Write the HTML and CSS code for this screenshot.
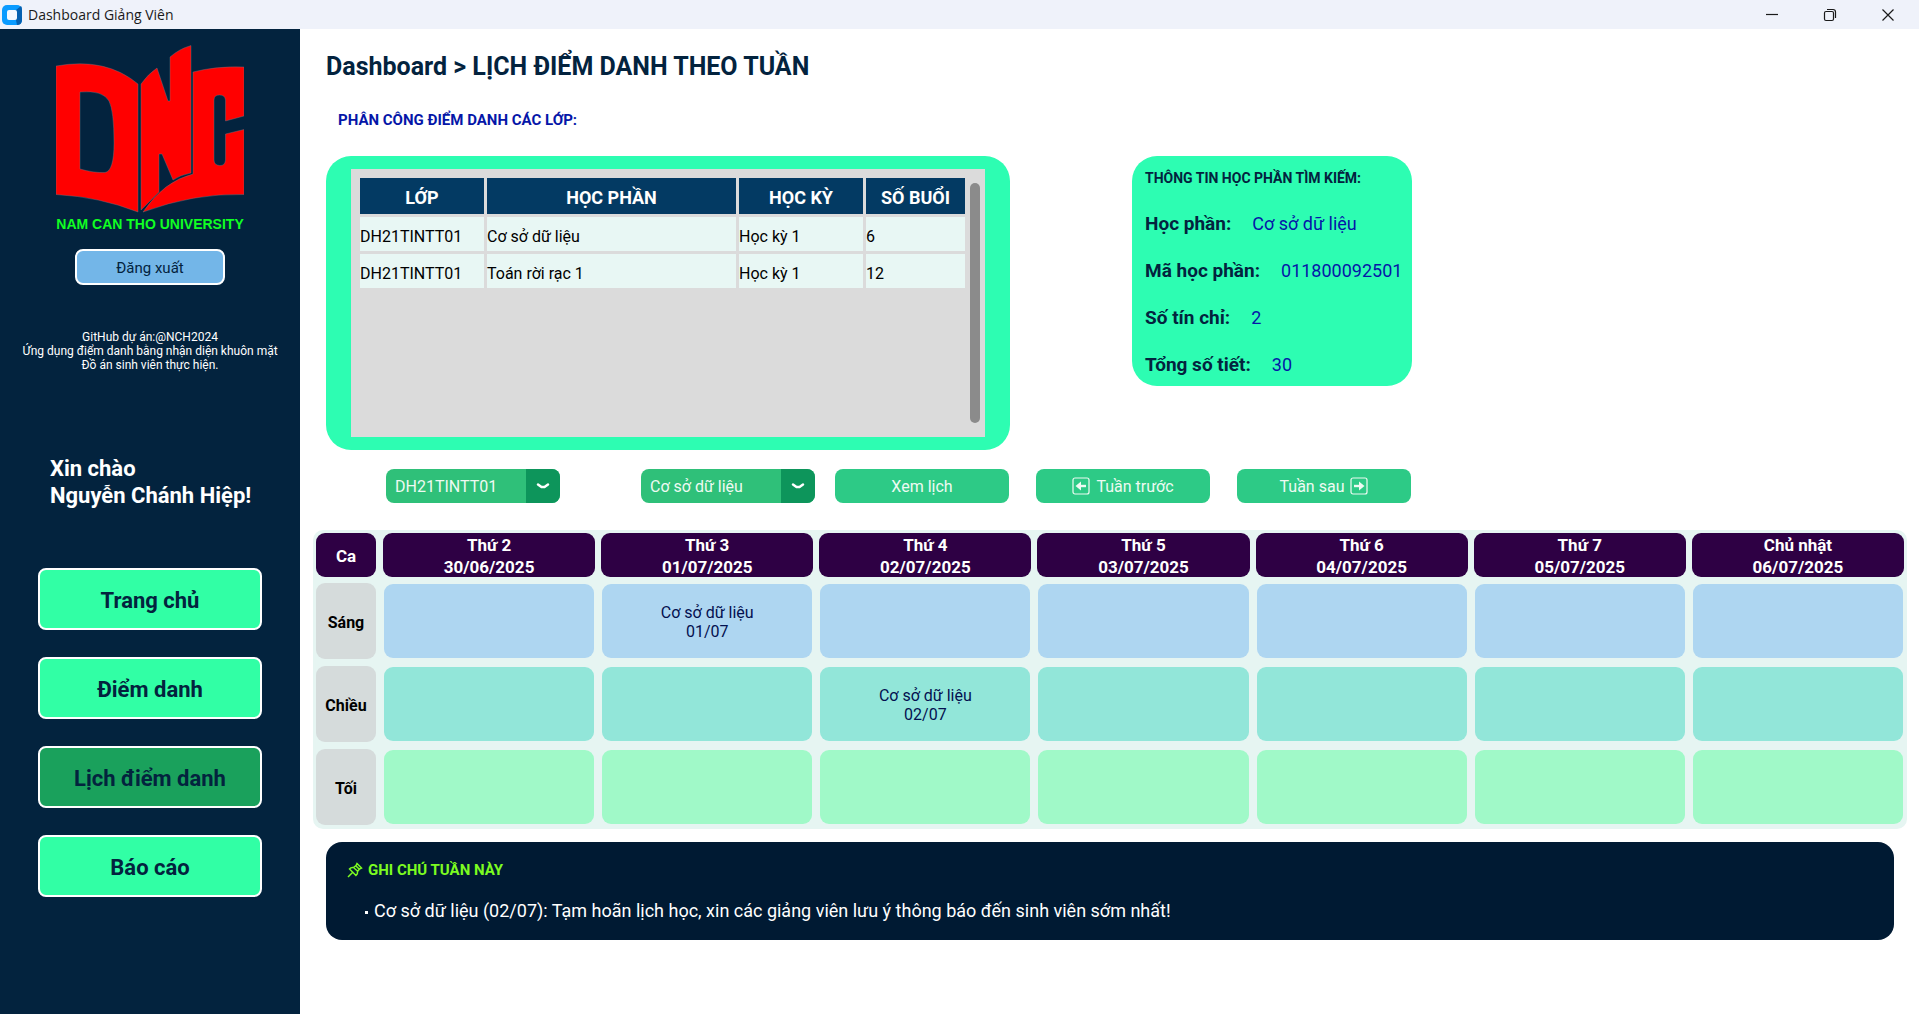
FILE: index.html
```html
<!DOCTYPE html>
<html lang="vi">
<head>
<meta charset="utf-8">
<title>Dashboard Giảng Viên</title>
<link rel="stylesheet" href="styles.css">
</head>
<body>
<header class="titlebar">
  <svg class="app-icon" width="20" height="20" viewBox="0 0 20 20" aria-hidden="true">
    <rect width="20" height="20" rx="5" fill="#0a9bff"/>
    <path d="M14 5l5-4q1 1 1 4v10q0 5-5 5l-1-5z" fill="#0560b0"/>
    <rect x="5" y="5" width="10" height="10" rx="2" fill="#f4f8ff"/>
  </svg>
  <span class="app-title">Dashboard Giảng Viên</span>
  <div class="window-buttons">
    <button type="button" aria-label="Minimize"><svg width="14" height="14" viewBox="0 0 14 14"><path d="M1 6.5h12"/></svg></button>
    <button type="button" aria-label="Restore"><svg width="14" height="14" viewBox="0 0 14 14"><rect x="1.500" y="3.500" width="9" height="9" rx="1.500"/><path d="M4 1.500h6q2.500 0 2.500 2.500v6"/></svg></button>
    <button type="button" aria-label="Close"><svg width="14" height="14" viewBox="0 0 14 14"><path d="M1.500 1.500l11 11M12.500 1.500l-11 11"/></svg></button>
  </div>
</header>
<div class="app">
  <aside class="sidebar">
    <svg class="logo" width="188" height="186" viewBox="0 0 188 186" role="img" aria-label="Nam Can Tho University">
      <g fill="#f00" stroke="#6d7f8c" stroke-width=".4">
        <path fill-rule="evenodd" d="M0 21Q50 12 82 39V167Q44 152 0 149.500ZM24 47V124Q38 128 49 127.500Q58 126 58 98Q58 66 53 56Q47 45 24 47Z"/>
        <path d="M85 39Q92 29 101 23L112 56H114V12Q123 4 135 .500V128Q124 130 117 135L106 109H103V147L85 165Z"/>
        <path d="M137 27Q160 21 188 22V71L169.500 76V55Q169 50 163.500 50T158 55V115Q158 120 163.500 120.500T169.500 115V89L188 84.500V149.500Q138 148 87 167Q108 136 137 129Z"/>
      </g>
      <text x="94" y="184" text-anchor="middle" class="logo-text">NAM CAN THO UNIVERSITY</text>
    </svg>
    <button type="button" class="logout">Đăng xuất</button>
    <p class="about">GitHub dự án:@NCH2024<br>Ứng dụng điểm danh bằng nhận diện khuôn mặt<br>Đồ án sinh viên thực hiện.</p>
    <p class="greeting">Xin chào<br>Nguyễn Chánh Hiệp!</p>
    <nav class="menu">
      <button type="button">Trang chủ</button>
      <button type="button">Điểm danh</button>
      <button type="button" class="active" aria-current="page">Lịch điểm danh</button>
      <button type="button">Báo cáo</button>
    </nav>
  </aside>
  <main class="content">
    <h1>Dashboard &gt; LỊCH ĐIỂM DANH THEO TUẦN</h1>
    <h2 class="subtitle">PHÂN CÔNG ĐIỂM DANH CÁC LỚP:</h2>
    <div class="cards">
      <section class="class-card">
        <div class="class-panel">
          <table class="class-table">
            <colgroup><col class="c-class"><col class="c-course"><col class="c-term"><col class="c-count"></colgroup>
            <thead><tr><th>LỚP</th><th>HỌC PHẦN</th><th>HỌC KỲ</th><th>SỐ BUỔI</th></tr></thead>
            <tbody>
              <tr><td>DH21TINTT01</td><td>Cơ sở dữ liệu</td><td>Học kỳ 1</td><td>6</td></tr>
              <tr><td>DH21TINTT01</td><td>Toán rời rạc 1</td><td>Học kỳ 1</td><td>12</td></tr>
            </tbody>
          </table>
          <div class="scrollbar"></div>
        </div>
      </section>
      <section class="info-card">
        <h2>THÔNG TIN HỌC PHẦN TÌM KIẾM:</h2>
        <dl>
          <div><dt>Học phần:</dt><dd>Cơ sở dữ liệu</dd></div>
          <div><dt>Mã học phần:</dt><dd>011800092501</dd></div>
          <div><dt>Số tín chỉ:</dt><dd>2</dd></div>
          <div><dt>Tổng số tiết:</dt><dd>30</dd></div>
        </dl>
      </section>
    </div>
    <div class="toolbar">
      <div class="filters">
        <div class="combo">
          <select aria-label="Lớp"><option>DH21TINTT01</option></select>
          <span class="combo-arrow"><svg width="14" height="8" viewBox="0 0 14 8"><path d="M2 2.500L5.500 5H8.500L12 2.500"/></svg></span>
        </div>
        <div class="combo">
          <select aria-label="Học phần"><option>Cơ sở dữ liệu</option></select>
          <span class="combo-arrow"><svg width="14" height="8" viewBox="0 0 14 8"><path d="M2 2.500L5.500 5H8.500L12 2.500"/></svg></span>
        </div>
      </div>
      <div class="actions">
        <button type="button">Xem lịch</button>
        <button type="button"><svg width="18" height="18" viewBox="0 0 18 18"><rect x="1" y="1" width="16" height="16" rx="2"/><path class="arrow" d="M14 9H7"/><path class="arrow-head" d="M3.500 9L9 4.500V13.500Z"/></svg>Tuần trước</button>
        <button type="button">Tuần sau<svg width="18" height="18" viewBox="0 0 18 18"><rect x="1" y="1" width="16" height="16" rx="2"/><path class="arrow" d="M4 9h7"/><path class="arrow-head" d="M14.500 9L9 4.500V13.500Z"/></svg></button>
      </div>
    </div>
    <table class="schedule">
      <thead>
        <tr>
          <th class="shift"><div>Ca</div></th>
          <th><div>Thứ 2<br>30/06/2025</div></th>
          <th><div>Thứ 3<br>01/07/2025</div></th>
          <th><div>Thứ 4<br>02/07/2025</div></th>
          <th><div>Thứ 5<br>03/07/2025</div></th>
          <th><div>Thứ 6<br>04/07/2025</div></th>
          <th><div>Thứ 7<br>05/07/2025</div></th>
          <th><div>Chủ nhật<br>06/07/2025</div></th>
        </tr>
      </thead>
      <tbody>
        <tr class="morning">
          <th class="shift"><div>Sáng</div></th>
          <td><div></div></td><td><div>Cơ sở dữ liệu<br>01/07</div></td><td><div></div></td><td><div></div></td><td><div></div></td><td><div></div></td><td><div></div></td>
        </tr>
        <tr class="afternoon">
          <th class="shift"><div>Chiều</div></th>
          <td><div></div></td><td><div></div></td><td><div>Cơ sở dữ liệu<br>02/07</div></td><td><div></div></td><td><div></div></td><td><div></div></td><td><div></div></td>
        </tr>
        <tr class="evening">
          <th class="shift"><div>Tối</div></th>
          <td><div></div></td><td><div></div></td><td><div></div></td><td><div></div></td><td><div></div></td><td><div></div></td><td><div></div></td>
        </tr>
      </tbody>
    </table>
    <section class="notes">
      <h2><svg width="16" height="16" viewBox="0 0 16 16" aria-hidden="true"><path d="M10 1.500L14.500 6L12.500 7L10.500 9.500Q11 12 9 13.500L2.500 7Q4 5 6.500 5.500L9 3.500ZM5.500 10.500L1 15M7 6l4 3.500M9 4l3 3"/></svg>GHI CHÚ TUẦN NÀY</h2>
      <ul><li>Cơ sở dữ liệu (02/07): Tạm hoãn lịch học, xin các giảng viên lưu ý thông báo đến sinh viên sớm nhất!</li></ul>
    </section>
  </main>
</div>
</body>
</html>
```
FILE: styles.css
```css
* { box-sizing: border-box; }
body {
  margin: 0;
  min-height: 100vh;
  display: flex;
  flex-direction: column;
  background: #fff;
  color: #03233e;
  font-family: Bahnschrift, Roboto, sans-serif;
}
h1, h2, p, ul, dl, dd { margin: 0; padding: 0; }
button, select { font-family: inherit; cursor: pointer; }

.titlebar {
  display: flex;
  align-items: center;
  height: 29px;
  padding: 0 2px;
  background: #eff2fa;
  color: #1a1a1a;
}
.app-title { margin-left: 6px; font: 14px/20px "Segoe UI", "Open Sans", sans-serif; }
.window-buttons { display: flex; margin-left: auto; }
.window-buttons button {
  width: 58px;
  height: 29px;
  padding: 0;
  border: 0;
  background: none;
}
.window-buttons svg { display: block; margin: 0 auto; fill: none; stroke: #1a1a1a; stroke-width: 1.2; }

.app { flex: 1; display: flex; }
.sidebar {
  width: 300px;
  flex: none;
  display: flex;
  flex-direction: column;
  align-items: center;
  padding: 16px 0 24px;
  background: #03233e;
  color: #fff;
}
.logo { display: block; overflow: hidden; }
.logo-text { font: bold 14px "Liberation Sans", sans-serif; fill: #1f2; }
.logout {
  width: 150px;
  height: 36px;
  margin-top: 18px;
  padding: 2px 0 0;
  border: 2px solid #fff;
  border-radius: 8px;
  background: #73b6e8;
  color: #03233e;
  font-size: 15px;
}
.about { margin-top: 45px; font-size: 12px; line-height: 14px; text-align: center; }
.greeting { width: 200px; margin-top: 83px; font-size: 22px; font-weight: 700; line-height: 27px; white-space: nowrap; }
.menu { display: flex; flex-direction: column; gap: 27px; margin-top: 59px; }
.menu button {
  width: 224px;
  height: 62px;
  padding: 2px 0 0;
  border: 2px solid #fff;
  border-radius: 8px;
  background: #31ffa5;
  color: #03233e;
  font-size: 22px;
  font-weight: 700;
}
.menu .active { background: #1aa15c; }

.content { flex: 1; min-width: 0; padding: 23px 12px 24px 13px; }
h1 { margin-left: 13px; font-size: 25px; line-height: 30px; }
.subtitle { margin: 28px 0 26px 25px; color: #0516a8; font-size: 15px; line-height: 20px; }
.cards { display: flex; align-items: flex-start; gap: 122px; margin-left: 13px; }
.class-card { width: 684px; padding: 13px 25px; border-radius: 25px; background: #2dfdb2; }
.class-panel {
  display: flex;
  gap: 2px;
  height: 268px;
  padding: 6px 5px 14px 6px;
  background: #dbdbdb;
}
.class-table { flex: 1; align-self: flex-start; table-layout: fixed; border-spacing: 3px; color: #000; }
.class-table th { height: 36px; padding: 2px 0 0; background: #033a63; color: #fff; font-size: 18px; }
.class-table td { height: 34px; padding: 4px 0 0; background: #e8f7f4; font-size: 16px; }
.c-class, .c-term { width: 124px; }
.c-count { width: 99px; }
.scrollbar { width: 10px; margin-top: 8px; border-radius: 5px; background: #8b8b8b; }

.info-card { width: 280px; height: 230px; padding: 12px 13px; border-radius: 25px; background: #2dfdb2; white-space: nowrap; }
.info-card h2 { font-size: 14px; line-height: 20px; }
.info-card dl { display: grid; gap: 23px; margin-top: 24px; font-size: 19px; line-height: 24px; }
.info-card dl div { display: flex; gap: 21px; }
.info-card dt { font-weight: 700; }
.info-card dd { color: #0516a8; font-size: 18px; }

.toolbar { display: flex; gap: 20px; margin: 19px 0 27px 73px; font-family: Roboto, sans-serif; }
.filters { display: flex; gap: 81px; }
.actions { display: flex; gap: 27px; }
.combo { position: relative; width: 174px; height: 34px; border-radius: 8px; overflow: hidden; }
.combo select {
  width: 100%;
  height: 100%;
  padding: 0 40px 0 9px;
  border: 0;
  appearance: none;
  background: #2fc079;
  color: #eefaf2;
  font-size: 16px;
}
.combo-arrow {
  position: absolute;
  inset: 0 0 0 auto;
  width: 34px;
  display: grid;
  place-items: center;
  background: #0d955b;
  pointer-events: none;
}
.combo-arrow svg { fill: none; stroke: #fff; stroke-width: 2.5; stroke-linecap: round; stroke-linejoin: round; }
.actions button {
  display: flex;
  align-items: center;
  justify-content: center;
  gap: 6px;
  width: 174px;
  height: 34px;
  padding: 0;
  border: 0;
  border-radius: 8px;
  background: #2dca86;
  color: #eefaf2;
  font-size: 16px;
}
.actions svg { fill: none; stroke: #eefaf2; stroke-width: 1.2; }
.actions .arrow { stroke-width: 2.4; }
.actions .arrow-head { fill: #eefaf2; stroke: none; }

.schedule { width: 100%; table-layout: fixed; border-spacing: 0; border-radius: 10px; background: #e6f5f2; }
.schedule th, .schedule td { padding: 3px; }
.schedule td { padding: 4px; }
.schedule .shift { width: 67px; padding-right: 4px; }
.schedule div { display: grid; place-content: center; padding-top: 2px; text-align: center; border-radius: 9px; }
.schedule thead div { height: 44px; background: #2e0044; color: #fff; font-size: 17px; line-height: 22px; }
.schedule tbody th { padding-bottom: 4px; }
.schedule tbody th div { height: 76px; background: #d5dbdb; color: #000; font-size: 16px; }
.schedule tbody td { padding-bottom: 5px; }
.schedule tbody td div { height: 74px; color: #03104f; font-size: 16px; line-height: 19px; }
.morning td div { background: #aed6f1; }
.afternoon td div { background: #92e6d9; }
.evening td div { background: #a0f9c8; }

.notes { margin: 13px 13px 0; padding: 18px 21px; border-radius: 16px; background: #001a33; }
.notes h2 { display: flex; align-items: center; gap: 5px; color: #7cfc21; font-size: 15px; line-height: 20px; }
.notes svg { fill: none; stroke: #7cfc21; stroke-width: 1.5; }
.notes ul { margin-top: 20px; padding: 0 0 0 18px; list-style: none; color: #fff; font-size: 18px; line-height: 22px; }
.notes li { display: flex; gap: 6px; }
.notes li::before { content: ""; width: 3px; height: 3px; margin-top: 11px; background: #fff; }
```
